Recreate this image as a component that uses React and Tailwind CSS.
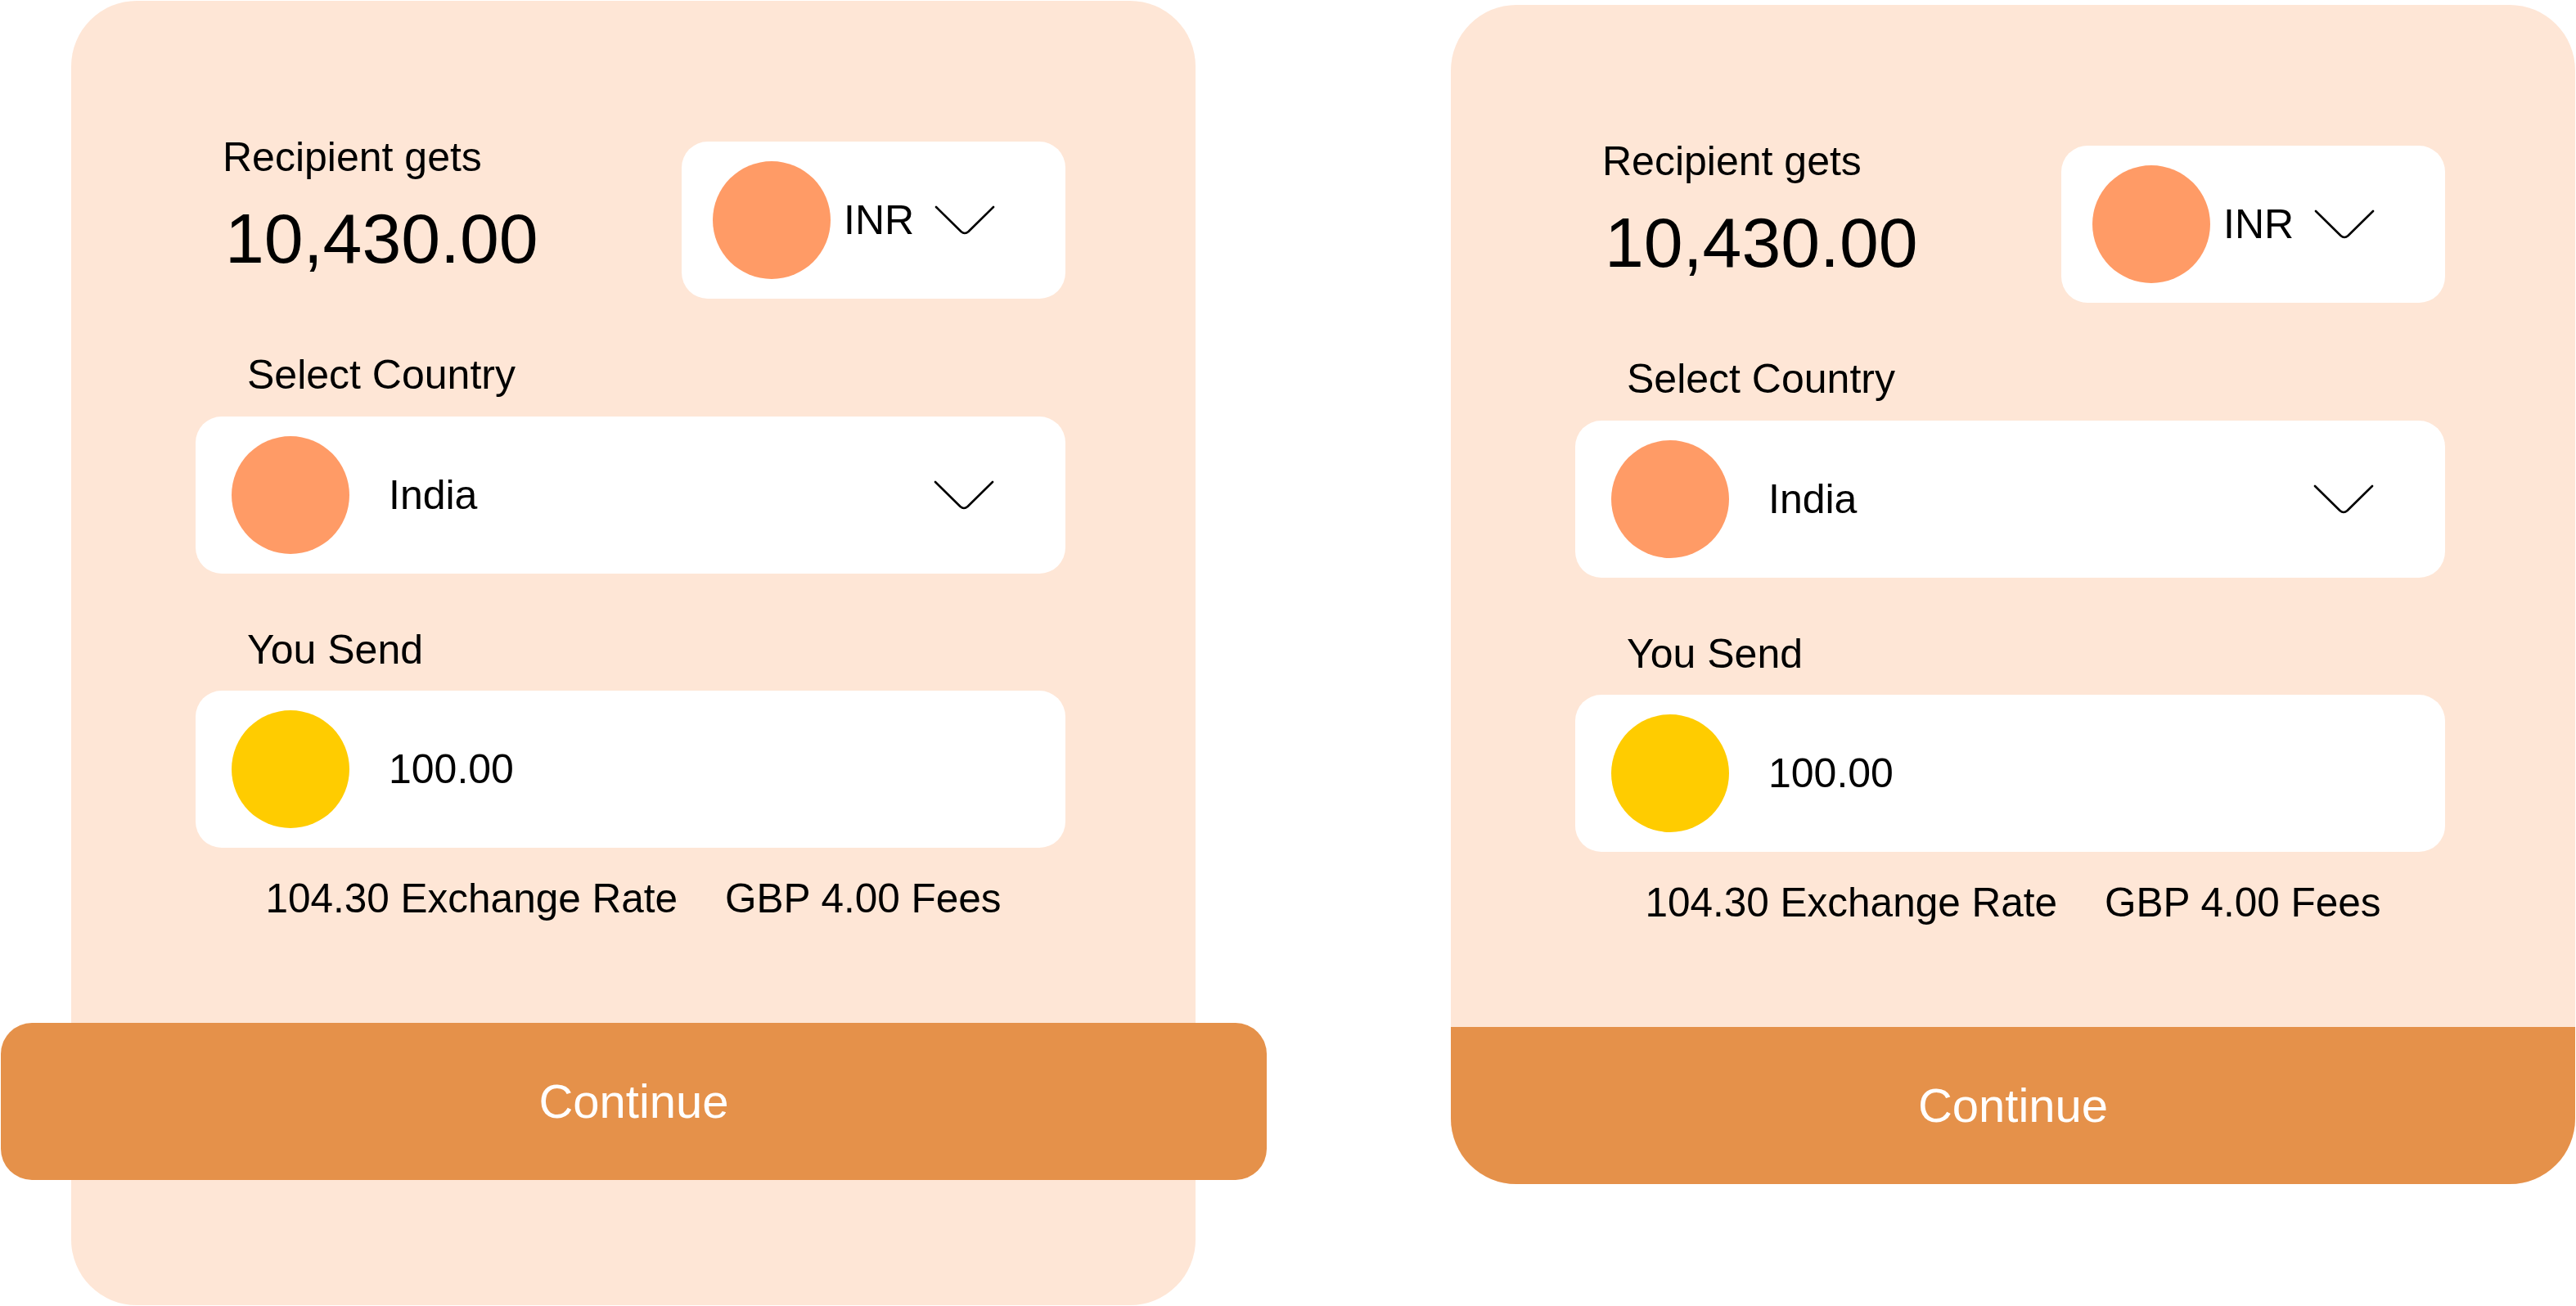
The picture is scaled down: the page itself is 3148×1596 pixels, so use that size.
import React from "react";

function Chevron() {
  return (
    <svg width="74" height="37" viewBox="0 0 74 37" fill="none" className="shrink-0">
      <path
        d="M2 2 L32.5 32 Q37 36 41.5 32 L72 2"
        stroke="#000"
        strokeWidth="2.6"
        strokeLinecap="round"
        strokeLinejoin="round"
      />
    </svg>
  );
}

function Content() {
  return (
    <>
      <div className="pl-[152px] pr-[159px] flex flex-col">
        <div className="flex items-start justify-between">
          <div className="pl-[33px] flex flex-col">
            <div className="text-[50px] leading-[50px] text-black whitespace-nowrap">Recipient gets</div>
            <div className="mt-[31px] ml-[3px] text-[86px] leading-[86px] text-black whitespace-nowrap">10,430.00</div>
          </div>
          <div className="mt-[6px] w-[469px] h-[192px] rounded-[32px] bg-white flex items-center pl-[38px] shrink-0">
            <div className="w-[144px] h-[144px] rounded-full bg-[#FF9B66] shrink-0" />
            <div className="ml-[16px] text-[50px] leading-[50px] text-black">INR</div>
            <div className="ml-[25px] flex items-center">
              <Chevron />
            </div>
          </div>
        </div>

        <div className="mt-[68px] pl-[63px] text-[50px] leading-[50px] text-black whitespace-nowrap">Select Country</div>
        <div className="mt-[26px] h-[192px] rounded-[32px] bg-white flex items-center pl-[44px] pr-[87px]">
          <div className="w-[144px] h-[144px] rounded-full bg-[#FF9B66] shrink-0" />
          <div className="ml-[48px] text-[50px] leading-[50px] text-black">India</div>
          <div className="ml-auto flex items-center">
            <Chevron />
          </div>
        </div>

        <div className="mt-[68px] pl-[63px] text-[50px] leading-[50px] text-black whitespace-nowrap">You Send</div>
        <div className="mt-[25px] h-[192px] rounded-[32px] bg-white flex items-center pl-[44px] pr-[87px]">
          <div className="w-[144px] h-[144px] rounded-full bg-[#FFCC00] shrink-0" />
          <div className="ml-[48px] text-[50px] leading-[50px] text-black">100.00</div>
        </div>
      </div>

      <div className="mt-[37px] flex justify-center gap-[58px] text-[49.5px] leading-[50px] text-black whitespace-nowrap">
        <span>104.30 Exchange Rate</span>
        <span>GBP 4.00 Fees</span>
      </div>
    </>
  );
}

export default function App() {
  return (
    <div
      className="w-[3148px] h-[1596px] bg-white flex items-start overflow-hidden"
      style={{ fontFamily: '"Liberation Sans", Arial, sans-serif' }}
    >
      {/* Left card: button overhangs the card */}
      <div className="ml-[87px] mt-[1px] w-[1374px] h-[1594px] shrink-0 rounded-[80px] bg-[#FEE6D6] flex flex-col pt-[166px]">
        <Content />
        <button className="mt-[127px] -ml-[86px] w-[1547px] h-[192px] shrink-0 rounded-[38px] bg-[#E5914A] flex items-center justify-center text-white text-[58px] leading-[58px]">
          Continue
        </button>
      </div>

      {/* Right card: button is the card's bottom */}
      <div className="ml-[312px] mt-[6px] w-[1374px] shrink-0 rounded-[80px] overflow-hidden bg-[#FEE6D6] flex flex-col pt-[166px]">
        <Content />
        <button className="mt-[127px] w-full h-[192px] bg-[#E5914A] flex items-center justify-center text-white text-[58px] leading-[58px]">
          Continue
        </button>
      </div>
    </div>
  );
}
